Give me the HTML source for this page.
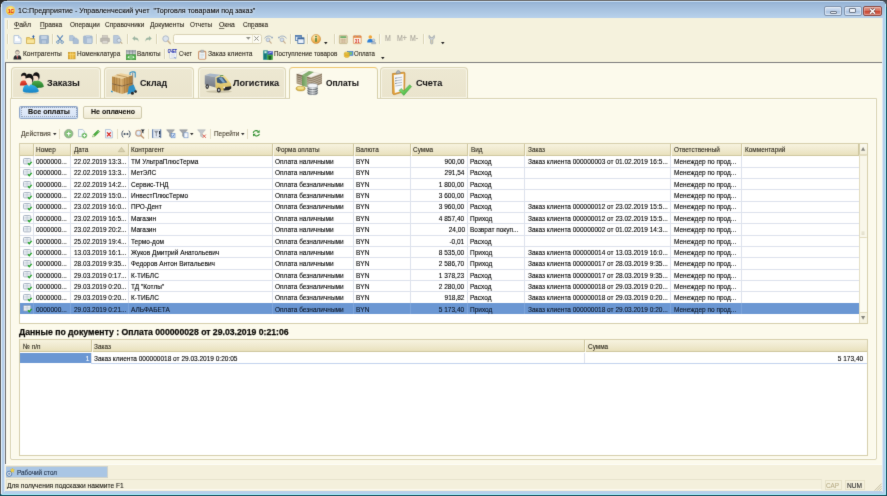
<!DOCTYPE html>
<html lang="ru"><head><meta charset="utf-8"><title>1С:Предприятие - Управленческий учет</title>
<style>
html,body{margin:0;padding:0}
body{width:887px;height:496px;overflow:hidden;position:relative;background:#26343c;font-family:"Liberation Sans",sans-serif}
.t{position:absolute;white-space:pre;line-height:12px;height:12px;display:block;-webkit-text-stroke:0.12px currentColor}
u{text-decoration-thickness:0.6px;text-underline-offset:0.6px;text-decoration-color:rgba(42,37,28,.6)}
div{box-sizing:border-box}
svg{overflow:visible}
#w{position:absolute;left:0;top:0;width:887px;height:496px;filter:url(#soft)}
</style></head><body><svg width="0" height="0" style="position:absolute"><defs><filter id="soft" x="0" y="0" width="100%" height="100%" color-interpolation-filters="sRGB"><feConvolveMatrix order="3" kernelMatrix="0.0086 0.0757 0.0086 0.0757 0.6628 0.0757 0.0086 0.0757 0.0086" divisor="1" edgeMode="duplicate" preserveAlpha="true"/></filter></defs></svg><div id="w">

<div style="position:absolute;left:0px;top:0px;width:887px;height:496px;background:#16505f;"></div>
<div style="position:absolute;left:0px;top:0px;width:887px;height:1.2px;background:#767676;"></div>
<div style="position:absolute;left:0px;top:0px;width:1.1px;height:494px;background:#5c5c5c;"></div>
<div style="position:absolute;left:0px;top:0px;width:7px;height:7px;background:#2c2c2c;"></div>
<div style="position:absolute;left:880px;top:0px;width:7px;height:7px;background:#4a4f55;"></div>
<div style="position:absolute;left:1px;top:1px;width:885px;height:494px;background:#b5cfea;border-radius:5px 5px 1px 1px;"></div>
<div style="position:absolute;left:1px;top:1px;width:885px;height:17px;background:linear-gradient(#c8e0f8 0,#c8e0f8 1px,#90b0d4 1.2px,#9cb8d8 3px,#b6d0ea 16px);border-radius:5px 5px 0 0;"></div>
<div style="position:absolute;left:1px;top:4px;width:1px;height:490px;background:#e4f4ff;"></div>
<div style="position:absolute;left:885px;top:4px;width:1px;height:490px;background:#b4f0ff;"></div>
<div style="position:absolute;left:2px;top:494px;width:884px;height:1px;background:#a8f0fc;"></div>
<div style="position:absolute;left:4.4px;top:18px;width:0.8px;height:473.5px;background:#dbe7f5;"></div>
<div style="position:absolute;left:881.8px;top:18px;width:0.8px;height:473.5px;background:#dbe7f5;"></div>
<div style="position:absolute;left:5px;top:17.6px;width:877px;height:473.4px;background:#f5f2dd;"></div>
<span class="t" style="left:17.5px;transform-origin:0 50%;top:4.90px;font-size:7.9px;transform:scaleX(0.9024);color:#000;font-weight:normal;text-shadow:0 0 3px rgba(255,255,255,.9),0 0 5px rgba(255,255,255,.7);-webkit-text-stroke:0.1px #000;">1С:Предприятие - Управленческий учет  "Торговля товарами под заказ"</span>
<div style="position:absolute;left:6.2px;top:6.2px;width:9.2px;height:9.2px;box-shadow:0 0 1.5px rgba(255,255,255,.8);border-radius:50%;background:radial-gradient(circle at 50% 35%,#fff2a0,#f7c83a 60%,#e39a1f);"></div>
<span class="t" style="left:7.8px;transform-origin:0 50%;top:5.00px;font-size:5.2px;transform:scaleX(0.9);color:#d81e1e;font-weight:bold;">1С</span>
<div style="position:absolute;left:823.5px;top:6px;width:18px;height:9.5px;border:1px solid #7f93ad;border-radius:2px;background:linear-gradient(#d6e3f3,#b9cde6 50%,#a9c1de 50%,#c4d6ec);box-shadow:inset 0 0 0 0.7px rgba(255,255,255,.6);"></div>
<div style="position:absolute;left:829.5px;top:11px;width:7px;height:2.6px;background:#eef2f8;border:0.7px solid #6a7585;border-radius:1px;"></div>
<div style="position:absolute;left:843.5px;top:6px;width:18px;height:9.5px;border:1px solid #7f93ad;border-radius:2px;background:linear-gradient(#d6e3f3,#b9cde6 50%,#a9c1de 50%,#c4d6ec);box-shadow:inset 0 0 0 0.7px rgba(255,255,255,.6);"></div>
<div style="position:absolute;left:849px;top:8.3px;width:7px;height:5px;background:#eef2f8;border:1.2px solid #6a7585;border-radius:1px;"></div>
<div style="position:absolute;left:863px;top:6px;width:18.5px;height:9.5px;border:1px solid #8a4a44;border-radius:2px;background:linear-gradient(#e3a193,#d36a58 50%,#c6452f 50%,#d97060);box-shadow:inset 0 0 0 0.7px rgba(255,255,255,.4);"></div>
<svg style="position:absolute;left:868.6px;top:7.6px;" width="7" height="6.4" viewBox="0 0 7 6.4"><path d="M1 .8L6 5.6M6 .8L1 5.6" stroke="#5a3a3a" stroke-width="2.6"/><path d="M1 .8L6 5.6M6 .8L1 5.6" stroke="#fff" stroke-width="1.5"/></svg>
<span class="t" style="left:14.1px;transform-origin:0 50%;top:19.00px;font-size:7.7px;transform:scaleX(0.898);color:#2e281e;font-weight:normal;"><u>Ф</u>айл</span>
<span class="t" style="left:40.4px;transform-origin:0 50%;top:19.00px;font-size:7.7px;transform:scaleX(0.8497);color:#2e281e;font-weight:normal;"><u>П</u>равка</span>
<span class="t" style="left:69.8px;transform-origin:0 50%;top:19.00px;font-size:7.7px;transform:scaleX(0.8274);color:#2e281e;font-weight:normal;">Операции</span>
<span class="t" style="left:104.8px;transform-origin:0 50%;top:19.00px;font-size:7.7px;transform:scaleX(0.8446);color:#2e281e;font-weight:normal;">Справочники</span>
<span class="t" style="left:149.9px;transform-origin:0 50%;top:19.00px;font-size:7.7px;transform:scaleX(0.8642);color:#2e281e;font-weight:normal;"><u>Д</u>окументы</span>
<span class="t" style="left:190.2px;transform-origin:0 50%;top:19.00px;font-size:7.7px;transform:scaleX(0.8266);color:#2e281e;font-weight:normal;">Отчеты</span>
<span class="t" style="left:218.7px;transform-origin:0 50%;top:19.00px;font-size:7.7px;transform:scaleX(0.883);color:#2e281e;font-weight:normal;"><u>О</u>кна</span>
<span class="t" style="left:243.4px;transform-origin:0 50%;top:19.00px;font-size:7.7px;transform:scaleX(0.831);color:#2e281e;font-weight:normal;">Сп<u>р</u>авка</span>
<div style="position:absolute;left:7.3px;top:19.5px;width:1px;height:9.5px;background:#dcd7bd;box-shadow:1px 0 0 #fcfbf2;"></div>
<div style="position:absolute;left:7.3px;top:34px;width:1px;height:9.5px;background:#dcd7bd;box-shadow:1px 0 0 #fcfbf2;"></div>
<div style="position:absolute;left:7.3px;top:49.5px;width:1px;height:9.5px;background:#dcd7bd;box-shadow:1px 0 0 #fcfbf2;"></div>
<svg style="position:absolute;left:12.7px;top:34.6px;" width="9" height="9" viewBox="0 0 9 9"><path d="M1 .6H5.6L8 3V8.4H1Z" fill="#fdfeff" stroke="#9fb6d3" stroke-width=".8"/><path d="M5.6 .6V3H8" fill="#e3ecf7" stroke="#9fb6d3" stroke-width=".6"/><path d="M1.6 6H7.4V8H1.6Z" fill="#e6eef8"/></svg>
<svg style="position:absolute;left:25.8px;top:34.6px;" width="10" height="9" viewBox="0 0 10 9"><path d="M.6 2.6H3.6L4.4 3.6H8.6V8.4H.6Z" fill="#f3d676" stroke="#c9a443" stroke-width=".8"/><path d="M1 5H8.2V8H1Z" fill="#f8e59c"/><path d="M7.4 3.4V1" stroke="#2f5fa5" stroke-width="1.1"/><path d="M5.9 1.8L7.4 .1L8.9 1.8Z" fill="#2f5fa5"/></svg>
<svg style="position:absolute;left:38.8px;top:34.6px;" width="10" height="9" viewBox="0 0 10 9"><rect x=".5" y=".5" width="9" height="8" rx=".6" fill="#9db3cd" stroke="#8ba3c0" stroke-width=".6"/><rect x="2.2" y=".8" width="5.6" height="3.2" fill="#c4d3e4"/><rect x="3" y="5.4" width="4" height="3" fill="#b7c8dc"/></svg>
<div style="position:absolute;left:51.5px;top:34px;width:1px;height:10px;background:#dbd5b8;box-shadow:1px 0 0 #fbf9ee"></div>
<svg style="position:absolute;left:56.3px;top:34.6px;" width="8" height="9" viewBox="0 0 8 9"><path d="M1.2 .4L5.6 6M6.8 .4L2.4 6" stroke="#5f89bb" stroke-width="1.2" fill="none"/><circle cx="1.9" cy="7.1" r="1.3" fill="none" stroke="#5f89bb" stroke-width=".9"/><circle cx="6.1" cy="7.1" r="1.3" fill="none" stroke="#5f89bb" stroke-width=".9"/></svg>
<svg style="position:absolute;left:69px;top:34.6px;" width="10" height="9" viewBox="0 0 10 9"><path d="M.6 .6H4L5.6 2.2V5.6H.6Z" fill="#b4c6db" stroke="#9fb4cd" stroke-width=".7"/><path d="M4.2 3.2H7.6L9.3 4.9V8.5H4.2Z" fill="#aabed6" stroke="#98aeca" stroke-width=".7"/></svg>
<svg style="position:absolute;left:83px;top:34.6px;" width="10" height="9" viewBox="0 0 10 9"><rect x=".6" y="1" width="8.6" height="7.5" rx=".7" fill="#a9bcd3" stroke="#97adc8" stroke-width=".7"/><rect x="3" y=".2" width="3.8" height="1.8" fill="#bccbdd"/><rect x="4" y="3.4" width="4.6" height="4.6" fill="#c6d4e4"/></svg>
<div style="position:absolute;left:95.5px;top:34px;width:1px;height:10px;background:#dbd5b8;box-shadow:1px 0 0 #fbf9ee"></div>
<svg style="position:absolute;left:99.8px;top:34.6px;" width="10" height="9" viewBox="0 0 10 9"><rect x="2.4" y=".5" width="5.2" height="3" fill="#d0ccc5" stroke="#b5b0a8" stroke-width=".5"/><rect x=".5" y="3" width="9" height="4" rx=".8" fill="#bcb8b0" stroke="#aaa69e" stroke-width=".5"/><rect x="2.2" y="5.6" width="5.6" height="2.8" fill="#d8d5cf" stroke="#b5b0a8" stroke-width=".5"/></svg>
<svg style="position:absolute;left:113.2px;top:34.6px;" width="10" height="9" viewBox="0 0 10 9"><path d="M.6 .5H5L6.8 2.2V8.2H.6Z" fill="#b9c9dc" stroke="#a2b5cd" stroke-width=".7"/><circle cx="6" cy="5.4" r="2" fill="#d7e2ee" stroke="#9fa9b5" stroke-width=".8"/><path d="M7.4 6.8L9.3 8.7" stroke="#bfa98a" stroke-width="1.2"/></svg>
<div style="position:absolute;left:126.5px;top:34px;width:1px;height:10px;background:#dbd5b8;box-shadow:1px 0 0 #fbf9ee"></div>
<svg style="position:absolute;left:132.3px;top:36px;" width="7" height="6" viewBox="0 0 7 6"><path d="M.2 2.4L3 .1V1.5C5.6 1.5 6.8 3 6.6 5.8C6 4.2 5 3.5 3 3.5V4.8Z" fill="#9db5a2"/></svg>
<svg style="position:absolute;left:144.8px;top:36px;" width="7" height="6" viewBox="0 0 7 6"><path d="M6.8 2.4L4 .1V1.5C1.4 1.5 .2 3 .4 5.8C1 4.2 2 3.5 4 3.5V4.8Z" fill="#9db5a2"/></svg>
<div style="position:absolute;left:156.2px;top:34px;width:1px;height:10px;background:#dbd5b8;box-shadow:1px 0 0 #fbf9ee"></div>
<svg style="position:absolute;left:161.8px;top:34.6px;" width="9" height="9.5" viewBox="0 0 9 9.5"><circle cx="3.7" cy="3.7" r="2.9" fill="#dbe3ed" stroke="#b0bac8" stroke-width="1"/><path d="M5.9 6L8.2 8.6" stroke="#cdb896" stroke-width="1.5" stroke-linecap="round"/></svg>
<div style="position:absolute;left:173px;top:33.7px;width:88.5px;height:10px;background:#fdfcf3;border:1px solid #d9d2b4;border-radius:2.5px;"></div>
<div style="position:absolute;left:252px;top:35px;width:1px;height:7.5px;background:#ece8d2;"></div>
<svg style="position:absolute;left:245.7px;top:37.4px;" width="4.6" height="2.8" viewBox="0 0 4.6 2.8"><path d="M0 0H4.6L2.3 2.8Z" fill="#8f8f86"/></svg>
<svg style="position:absolute;left:254.3px;top:36.3px;" width="5" height="5" viewBox="0 0 5 5"><path d="M.4 .4L4.6 4.6M4.6 .4L.4 4.6" stroke="#8f8f86" stroke-width="1"/></svg>
<svg style="position:absolute;left:264.4px;top:34.6px;" width="9" height="9" viewBox="0 0 9 9"><g><path d="M.6 3.4C2 .6 6.4 .2 8.4 2.8" fill="none" stroke="#8fa3bd" stroke-width=".9"/><path d="M8.9 1.4L8.6 3.6L6.6 3Z" fill="#8fa3bd"/></g><circle cx="4" cy="4.8" r="1.9" fill="#d4deea" stroke="#a3afbf" stroke-width=".8"/><path d="M5.4 6.2L7.2 8.2" stroke="#c9ae8e" stroke-width="1.2" stroke-linecap="round"/></svg>
<svg style="position:absolute;left:278px;top:34.6px;" width="9" height="9" viewBox="0 0 9 9"><g transform="translate(9 0) scale(-1 1)"><path d="M.6 3.4C2 .6 6.4 .2 8.4 2.8" fill="none" stroke="#8fa3bd" stroke-width=".9"/><path d="M8.9 1.4L8.6 3.6L6.6 3Z" fill="#8fa3bd"/></g><circle cx="4" cy="4.8" r="1.9" fill="#d4deea" stroke="#a3afbf" stroke-width=".8"/><path d="M5.4 6.2L7.2 8.2" stroke="#c9ae8e" stroke-width="1.2" stroke-linecap="round"/></svg>
<div style="position:absolute;left:289.9px;top:34px;width:1px;height:10px;background:#dbd5b8;box-shadow:1px 0 0 #fbf9ee"></div>
<svg style="position:absolute;left:294.8px;top:34.6px;" width="9.5" height="9" viewBox="0 0 9.5 9"><rect x=".4" y=".4" width="6" height="5" fill="#dfe9f5" stroke="#4f79ad" stroke-width=".8"/><rect x=".4" y=".4" width="6" height="1.4" fill="#4f79ad"/><rect x="2.8" y="2.8" width="6.2" height="5.6" fill="#eaf1fa" stroke="#3f6aa0" stroke-width=".8"/><rect x="2.8" y="2.8" width="6.2" height="1.5" fill="#3f6aa0"/></svg>
<div style="position:absolute;left:306.8px;top:34px;width:1px;height:10px;background:#dbd5b8;box-shadow:1px 0 0 #fbf9ee"></div>
<svg style="position:absolute;left:310.9px;top:33.9px;" width="10" height="10" viewBox="0 0 10 10"><defs><radialGradient id="gi" cx=".4" cy=".3" r=".8"><stop offset="0" stop-color="#fff1c4"/><stop offset=".55" stop-color="#f1b85a"/><stop offset="1" stop-color="#d98a2a"/></radialGradient></defs><circle cx="5" cy="5" r="4.6" fill="url(#gi)" stroke="#c98d3c" stroke-width=".5"/><rect x="4.3" y="4" width="1.4" height="3.8" fill="#3c7a32"/><circle cx="5" cy="2.6" r=".85" fill="#3c7a32"/></svg>
<svg style="position:absolute;left:324.4px;top:41.6px;" width="3.6" height="2.2" viewBox="0 0 3.6 2.2"><path d="M0 0H3.6L1.8 2.2Z" fill="#222"/></svg>
<div style="position:absolute;left:333.9px;top:34px;width:1px;height:10px;background:#dbd5b8;box-shadow:1px 0 0 #fbf9ee"></div>
<svg style="position:absolute;left:339.1px;top:34.5px;" width="8.6" height="9" viewBox="0 0 8.6 9"><rect x=".4" y=".4" width="7.8" height="8.2" rx=".6" fill="#eadfc0" stroke="#b9a77a" stroke-width=".7"/><rect x="1.3" y="1.2" width="6" height="1.8" fill="#6fae6a"/><path d="M1.4 4.4H7.2M1.4 5.8H7.2M1.4 7.2H7.2M3.2 3.6V8M5.2 3.6V8" stroke="#c6a98a" stroke-width=".6"/></svg>
<svg style="position:absolute;left:353.2px;top:34.5px;" width="8.6" height="9" viewBox="0 0 8.6 9"><rect x=".4" y=".8" width="7.8" height="7.8" rx=".6" fill="#fbf3e6" stroke="#d98a4a" stroke-width=".7"/><rect x=".4" y=".8" width="7.8" height="2" fill="#e7833d"/><path d="M2.4 0V2M6.2 0V2" stroke="#a9a9a9" stroke-width=".8"/><text x="4.3" y="7.6" font-size="4.6" font-weight="bold" fill="#d8342a" text-anchor="middle" font-family="Liberation Sans, sans-serif">31</text></svg>
<svg style="position:absolute;left:367.2px;top:34.6px;" width="9" height="9" viewBox="0 0 9 9"><circle cx="3.3" cy="2" r="1.8" fill="#f0a53a"/><path d="M.2 7.6C.2 4.6 1.6 4 3.3 4S6.4 4.6 6.4 7.6Z" fill="#2f7fd6"/><circle cx="6.6" cy="5.2" r="1.3" fill="#c9d3de" stroke="#7f8fa3" stroke-width=".4"/><path d="M4.6 8.8C4.6 7 5.4 6.6 6.6 6.6S8.8 7 8.8 8.8Z" fill="#aebccc" stroke="#7f8fa3" stroke-width=".4"/></svg>
<div style="position:absolute;left:379.3px;top:34px;width:1px;height:10px;background:#dbd5b8;box-shadow:1px 0 0 #fbf9ee"></div>
<span class="t" style="left:384.6px;transform-origin:0 50%;top:33.40px;font-size:8.2px;transform:scaleX(0.85);color:#aaa69c;font-weight:normal;">M</span>
<span class="t" style="left:396.8px;transform-origin:0 50%;top:33.40px;font-size:8.2px;transform:scaleX(0.85);color:#aaa69c;font-weight:normal;">M+</span>
<span class="t" style="left:410px;transform-origin:0 50%;top:33.40px;font-size:8.2px;transform:scaleX(0.85);color:#aaa69c;font-weight:normal;">M-</span>
<div style="position:absolute;left:422.5px;top:34px;width:1px;height:10px;background:#dbd5b8;box-shadow:1px 0 0 #fbf9ee"></div>
<svg style="position:absolute;left:427.6px;top:34.8px;" width="7.4" height="9.4" viewBox="0 0 7.4 9.4"><path d="M1 .4V2.4C1 3.6 2.2 4 2.6 4.6V8.2C2.6 9.2 4.8 9.2 4.8 8.2V4.6C5.2 4 6.4 3.6 6.4 2.4V.4L5 1.6V2.6H2.4V1.6Z" fill="#cfd3d6" stroke="#8f979e" stroke-width=".6"/><path d="M3.1 5.4H4.3M3.1 6.6H4.3M3.1 7.8H4.3" stroke="#d6c58a" stroke-width=".6"/></svg>
<svg style="position:absolute;left:440.5px;top:41.6px;" width="3.6" height="2.2" viewBox="0 0 3.6 2.2"><path d="M0 0H3.6L1.8 2.2Z" fill="#222"/></svg>
<div style="position:absolute;left:5px;top:62px;width:877px;height:1.3px;background:#7d7d7d;"></div>
<div style="position:absolute;left:4.9px;top:63px;width:1.2px;height:401px;background:#6c6c6c;"></div>
<div style="position:absolute;left:6px;top:63.3px;width:876px;height:400.7px;background:#fcfaec;"></div>
<svg style="position:absolute;left:13px;top:49.5px;" width="9" height="10" viewBox="0 0 9 10"><circle cx="4.4" cy="2.3" r="2" fill="#e9d9c6" stroke="#7a7a7a" stroke-width=".5"/><path d="M2.6 1.6C3 .2 5.8 .2 6.2 1.6C5.4 1.2 3.4 1.2 2.6 1.6Z" fill="#555"/><path d="M.5 9.6C.5 6 2 5 4.4 5S8.3 6 8.3 9.6Z" fill="#2c2c30"/><path d="M3.2 5L4.4 8.8L5.6 5Z" fill="#f4f4f4"/><path d="M4.1 5.4H4.7L4.9 8L4.4 8.8L3.9 8Z" fill="#b33"/></svg>
<svg style="position:absolute;left:67.6px;top:52px;" width="7.4" height="7.2" viewBox="0 0 7.4 7.2"><rect x=".3" y=".3" width="6.8" height="6.6" fill="#e9b53a" stroke="#c28f22" stroke-width=".6"/><path d="M.3 2.6H7.1M2.6 .3V6.9M4.8 .3V6.9" stroke="#f7dc85" stroke-width=".6"/></svg>
<svg style="position:absolute;left:126px;top:49.5px;" width="10" height="10" viewBox="0 0 10 10"><rect x=".3" y=".3" width="9.4" height="4.2" fill="#c8ccd0" stroke="#8d949b" stroke-width=".6"/><path d="M.3 1.8H9.7M3.4 .3V4.5M6.6 .3V4.5" stroke="#767d85" stroke-width=".6"/><rect x=".3" y="4.8" width="9.4" height="4.9" fill="#4fb04a" stroke="#3a8e37" stroke-width=".6"/><path d="M1.4 7.2L3.4 5.6V8.8ZM8.6 7.2L6.6 5.6V8.8Z" fill="#e8f6e6"/><path d="M5 5V9.6" stroke="#e8f6e6" stroke-width=".6"/></svg>
<div style="position:absolute;left:164.3px;top:49px;width:1px;height:10px;background:#dbd5b8;box-shadow:1px 0 0 #fbf9ee"></div>
<svg style="position:absolute;left:168.3px;top:49.3px;" width="9" height="10" viewBox="0 0 9 10"><rect x="1.8" y="2.6" width="6.4" height="7" fill="#f3f5f8" stroke="#b8c1cc" stroke-width=".5"/><path d="M3 5.4H7M3 6.8H7M3 8.2H6" stroke="#c6ced8" stroke-width=".5"/><text x="-.2" y="3.7" font-size="4.6" font-weight="bold" fill="#2430b4" stroke="#2430b4" stroke-width=".15" font-family="Liberation Sans, sans-serif" textLength="9" lengthAdjust="spacingAndGlyphs">СЧЕТ</text><path d="M5.6 8.2L7.6 9.8V8.2Z" fill="#5a78c8"/></svg>
<svg style="position:absolute;left:198px;top:50px;" width="8.4" height="9.6" viewBox="0 0 8.4 9.6"><rect x=".5" y="1.2" width="7.4" height="8" rx=".8" fill="#dda070" stroke="#b06a3c" stroke-width=".5"/><rect x="1.2" y="2.2" width="6" height="6.6" fill="#eef5f8"/><rect x="2.6" y=".2" width="3.2" height="2" rx=".5" fill="#b9bec4" stroke="#7f858c" stroke-width=".4"/><path d="M2.4 4.4H6M2.4 5.8H6M2.4 7.2H5" stroke="#b9c9d2" stroke-width=".5"/></svg>
<svg style="position:absolute;left:263px;top:49.5px;" width="10" height="10" viewBox="0 0 10 10"><rect x=".2" y=".4" width="4.6" height="9.4" fill="#1f8a8a"/><rect x="4.8" y="1.2" width="5" height="4" fill="#3b4fc0"/><rect x="4.2" y="4.6" width="5.6" height="5.2" fill="#3fa33f"/><rect x="5.6" y="6" width="2.6" height="3.8" fill="#1d5e2a"/><path d="M1.4 1.2H3.6V3.2H1.4Z" fill="#d6efe9"/><path d="M2 4V9" stroke="#0d5a5a" stroke-width=".8"/><path d="M5.4 3.2L8.8 2" stroke="#e7e9ff" stroke-width=".7"/></svg>
<svg style="position:absolute;left:344px;top:50.6px;" width="9.4" height="7" viewBox="0 0 9.4 7"><rect x="3.4" y=".3" width="5.6" height="4.2" fill="#5d9be0" stroke="#3a73b7" stroke-width=".5"/><rect x="4.4" y="1.2" width="3.6" height="2.4" fill="#79c26f"/><ellipse cx="2.8" cy="2" rx="2.5" ry="1.1" fill="#f5d04d" stroke="#c59a22" stroke-width=".4"/><path d="M.3 2V5.4C.3 6.8 5.3 6.8 5.3 5.4V2C5.3 3.4 .3 3.4 .3 2Z" fill="#ecbd38" stroke="#c59a22" stroke-width=".4"/><path d="M.3 3.6C.3 5 5.3 5 5.3 3.6" fill="none" stroke="#c59a22" stroke-width=".4"/></svg>
<svg style="position:absolute;left:381.0px;top:57.2px;" width="3.6" height="2.2" viewBox="0 0 3.6 2.2"><path d="M0 0H3.6L1.8 2.2Z" fill="#222"/></svg>
<span class="t" style="left:22.7px;transform-origin:0 50%;top:48.40px;font-size:7.7px;transform:scaleX(0.8578);color:#2e281e;font-weight:normal;">Контрагенты</span>
<span class="t" style="left:77.4px;transform-origin:0 50%;top:48.40px;font-size:7.7px;transform:scaleX(0.8379);color:#2e281e;font-weight:normal;">Номенклатура</span>
<span class="t" style="left:136.8px;transform-origin:0 50%;top:48.40px;font-size:7.7px;transform:scaleX(0.8223);color:#2e281e;font-weight:normal;">Валюты</span>
<span class="t" style="left:179px;transform-origin:0 50%;top:48.40px;font-size:7.7px;transform:scaleX(0.7571);color:#2e281e;font-weight:normal;">Счет</span>
<span class="t" style="left:208px;transform-origin:0 50%;top:48.40px;font-size:7.7px;transform:scaleX(0.8752);color:#2e281e;font-weight:normal;">Заказ клиента</span>
<span class="t" style="left:274.1px;transform-origin:0 50%;top:48.40px;font-size:7.7px;transform:scaleX(0.8158);color:#2e281e;font-weight:normal;">Поступление товаров</span>
<span class="t" style="left:354.4px;transform-origin:0 50%;top:48.40px;font-size:7.7px;transform:scaleX(0.789);color:#2e281e;font-weight:normal;">Оплата</span>
<div style="position:absolute;left:10.5px;top:67px;width:90px;height:31px;background:linear-gradient(#ede8d2,#eae4cd);border:1px solid #dcd6b8;border-bottom:none;border-radius:4px 4px 0 0;box-shadow:inset 0 0 0 1px #f7f4e6;"></div>
<div style="position:absolute;left:104px;top:67px;width:90px;height:31px;background:linear-gradient(#ede8d2,#eae4cd);border:1px solid #dcd6b8;border-bottom:none;border-radius:4px 4px 0 0;box-shadow:inset 0 0 0 1px #f7f4e6;"></div>
<div style="position:absolute;left:197.5px;top:67px;width:88.5px;height:31px;background:linear-gradient(#ede8d2,#eae4cd);border:1px solid #dcd6b8;border-bottom:none;border-radius:4px 4px 0 0;box-shadow:inset 0 0 0 1px #f7f4e6;"></div>
<div style="position:absolute;left:289px;top:67px;width:88.5px;height:32px;background:#fcfaec;border:1px solid #d6cfa8;border-top:1.4px solid #efc66e;border-bottom:none;border-radius:4px 4px 0 0;"></div>
<div style="position:absolute;left:380px;top:67px;width:88px;height:31px;background:linear-gradient(#ede8d2,#eae4cd);border:1px solid #dcd6b8;border-bottom:none;border-radius:4px 4px 0 0;box-shadow:inset 0 0 0 1px #f7f4e6;"></div>
<div style="position:absolute;left:10.2px;top:97.6px;width:866.4px;height:362.4px;border:1.5px solid #d9d3b4;border-radius:0 0 2px 2px;box-shadow:inset 0 0 0 1px #fefdf6;"></div>
<div style="position:absolute;left:290px;top:97px;width:86.5px;height:2.5px;background:#fcfaec;"></div>
<svg style="position:absolute;left:20.3px;top:72px;" width="25" height="22.5" viewBox="0 0 25 22.5">
<defs>
<linearGradient id="pr" x1="0" y1="0" x2="0" y2="1"><stop offset="0" stop-color="#f0513a"/><stop offset="1" stop-color="#c2241a"/></linearGradient>
<linearGradient id="pg" x1="0" y1="0" x2="0" y2="1"><stop offset="0" stop-color="#4fae4a"/><stop offset="1" stop-color="#237a2c"/></linearGradient>
<linearGradient id="pb" x1="0" y1="0" x2="0" y2="1"><stop offset="0" stop-color="#37b4e6"/><stop offset="1" stop-color="#1480c4"/></linearGradient>
</defs>
<!-- red -->
<path d="M0 13.6C0 9.6 1.6 8.4 3.8 8.4S7 9.6 7.4 13.6Z" fill="url(#pr)"/>
<ellipse cx="3.8" cy="4.5" rx="2.6" ry="3.5" fill="#f9dfcb"/>
<path d="M1.1 4.4C.6 .6 5.6 -.4 6.6 2.6C6.8 4 6.6 5.6 6.2 6.4C6 4.2 4.6 2.6 1.1 4.4Z" fill="#151313"/>
<!-- green -->
<path d="M11.6 14.6C11.6 9.8 13.6 8.6 16.6 8.6S22.8 9.8 23.8 14.6C23.8 16.4 11.6 16.4 11.6 14.6Z" fill="url(#pg)"/>
<ellipse cx="16" cy="4.6" rx="2.8" ry="4.2" fill="#f9dfcb"/>
<path d="M13.1 4.2C12.6 -.6 19.4 -1.2 19.6 4C19.6 6 19.2 7.4 18.6 8C18.8 5.2 17.4 2.8 13.1 4.2Z" fill="#151313"/>
<!-- blue front -->
<path d="M2.8 19C2.8 13.8 5.4 12.4 9 12.4S17.6 13.8 18.8 19C18.8 21.6 2.8 21.6 2.8 19Z" fill="url(#pb)"/>
<ellipse cx="8.8" cy="7.4" rx="3.2" ry="5.2" fill="#fbe6d4"/>
<path d="M7 11.6H10.8L9 14.6Z" fill="#f9dfcb"/>
<path d="M5.5 6.6C4.8 .8 13.2 -.2 13.4 6.2C13.4 8.6 13 10 12.4 10.8C12.6 7.2 11 4.2 5.5 6.6Z" fill="#151313"/>
<ellipse cx="11" cy="21.4" rx="8" ry=".9" fill="#c9c2a6" opacity=".6"/>
</svg>
<svg style="position:absolute;left:111px;top:70.8px;" width="27" height="24" viewBox="0 0 27 24">
<defs>
<linearGradient id="bx1" x1="0" y1="0" x2="1" y2="0"><stop offset="0" stop-color="#b98a46"/><stop offset="1" stop-color="#d9b273"/></linearGradient>
<linearGradient id="bx2" x1="0" y1="0" x2="1" y2="0"><stop offset="0" stop-color="#cfa463"/><stop offset="1" stop-color="#a9793a"/></linearGradient>
</defs>
<!-- pallet jack back -->
<path d="M18.6 2.4C19 .8 24 .2 24.4 1.8" fill="none" stroke="#2f8fc4" stroke-width="1.3"/>
<path d="M21.6 1.4V20" stroke="#8d99a6" stroke-width="1.2"/>
<path d="M19 2.6V8M24.2 2V6.4" stroke="#2f8fc4" stroke-width="1.1"/>
<!-- lower boxes -->
<path d="M1 13.2L11 15.4V23L1 19.6Z" fill="url(#bx1)"/>
<path d="M11 15.4L21.6 12.4V19.6L11 23Z" fill="url(#bx2)"/>
<!-- upper boxes -->
<path d="M1 5.4L9.6 2.2L21.6 4.6L11 7.8Z" fill="#ecd19c"/>
<path d="M1 5.4L11 7.8V14.8L1 12.6Z" fill="url(#bx1)"/>
<path d="M11 7.8L21.6 4.6V11.8L11 14.8Z" fill="url(#bx2)"/>
<path d="M1 12.8L11 15.1L21.6 12.1" fill="none" stroke="#6d4a22" stroke-width=".9"/>
<path d="M3.4 6V20.4M5.8 6.6V21.4M8.4 7.2V22.2M13.6 7V22.2M16 6.2V21.4M18.8 5.4V20.6M5.6 3.8L16 6.2" stroke="#9a6e32" stroke-width=".55" fill="none"/>
<!-- blue jack -->
<path d="M17.8 15.6L22.6 13.4L25.4 20.6L16.4 23.4Z" fill="#2f8fc4"/>
<path d="M0 19.6L2 20.4L1.6 21.6L0 21Z" fill="#2f8fc4"/>
<circle cx="21.4" cy="22.2" r="1.5" fill="#2b2b2b"/><circle cx="24.6" cy="20.6" r="1.3" fill="#2b2b2b"/>
</svg>
<svg style="position:absolute;left:203.6px;top:73px;" width="29" height="20.5" viewBox="0 0 29 20.5">
<defs>
<linearGradient id="tk1" x1="0" y1="0" x2="0" y2="1"><stop offset="0" stop-color="#9aa1ac"/><stop offset="1" stop-color="#757a84"/></linearGradient>
<linearGradient id="tk2" x1="0" y1="0" x2="0" y2="1"><stop offset="0" stop-color="#f1e09a"/><stop offset="1" stop-color="#d6ba5a"/></linearGradient>
</defs>
<ellipse cx="15" cy="18.6" rx="13" ry="1.3" fill="#bdb69a" opacity=".7"/>
<!-- cargo -->
<path d="M.8 2.2L6 .4L16.6 1.8L11.6 4.2Z" fill="#a9b7c8"/>
<path d="M.8 2.2L11.6 4.2V14.6L.8 11.6Z" fill="url(#tk1)"/>
<!-- cab -->
<path d="M11.6 4.2L16.6 2L21 3L26.6 10.2L27.4 14.8L25.2 17L14.4 17.6L11.6 14.6Z" fill="url(#tk2)"/>
<path d="M12.6 5L16.4 3.6L19.4 4.4L23.4 9.6L16.6 10.4L13 9.4Z" fill="#3d5a78"/>
<path d="M14.6 4.8L17.6 4.2L21.4 9.4L18.8 9.8Z" fill="#7fa6c8"/>
<path d="M15.4 2.4L19 2L19.6 2.8L16 3.2Z" fill="#4d8a4a"/>
<path d="M19.6 14.2L27.2 13.2L27.2 15.4L24.8 17.2L19.6 17.4Z" fill="#26282c"/>
<circle cx="20.2" cy="14.6" r="1" fill="#fff8e0"/>
<!-- wheels -->
<ellipse cx="3.2" cy="13.6" rx="1.7" ry="2.3" fill="#2a2a2c"/><ellipse cx="3.2" cy="13.6" rx=".8" ry="1.1" fill="#b9bcc0"/>
<ellipse cx="14.8" cy="17" rx="2" ry="2.6" fill="#2a2a2c"/><ellipse cx="14.8" cy="17" rx=".9" ry="1.3" fill="#c9ccd0"/>
</svg>
<svg style="position:absolute;left:294.6px;top:70px;" width="28" height="26" viewBox="0 0 28 26">
<defs>
<linearGradient id="mn1" x1="0" y1="0" x2="0" y2="1"><stop offset="0" stop-color="#75634c"/><stop offset="1" stop-color="#b9aa8e"/></linearGradient>
<linearGradient id="mn2" x1="0" y1="0" x2="1" y2="0"><stop offset="0" stop-color="#6c9858"/><stop offset="1" stop-color="#98bd84"/></linearGradient>
<linearGradient id="cn" x1="0" y1="0" x2="1" y2="0"><stop offset="0" stop-color="#8d949a"/><stop offset=".5" stop-color="#f4f6f8"/><stop offset="1" stop-color="#8d949a"/></linearGradient>
</defs>
<!-- stack top -->
<path d="M1.6 3.8L11 .4L27 3.6L16 7.8Z" fill="#e9e4d8"/>
<path d="M3.6 3.8L11 1.2L24 3.8L16 6.6Z" fill="#f7f5ee"/>
<path d="M1.6 3.8L16 7.8V18.4L1.6 13.6Z" fill="url(#mn1)"/>
<path d="M16 7.8L27 3.6V13.4L16 18.4Z" fill="#93826a"/>
<path d="M1.6 5.8L16 9.8M1.6 7.8L16 11.8M1.6 9.8L16 13.8M1.6 11.8L16 15.8M16 9.8L27 5.6M16 11.8L27 7.6M16 13.8L27 9.6M16 15.8L27 11.6" stroke="#e6dfd0" stroke-width=".5"/>
<!-- green band -->
<path d="M7 5.2L14 1L19 2L12 6.6Z" fill="#82ad6e"/>
<path d="M7 5.2L12 6.6V17L7 15.4Z" fill="url(#mn2)"/>
<!-- gold coin -->
<ellipse cx="5.6" cy="18.6" rx="4.6" ry="2.3" fill="#d9b64a" stroke="#a9862a" stroke-width=".5"/>
<ellipse cx="5.6" cy="18.1" rx="3.4" ry="1.5" fill="#f4e08a"/>
<!-- silver coins -->
<path d="M12.6 15.6V23.4C12.6 26 22.6 26 22.6 23.4V15.6Z" fill="url(#cn)"/>
<path d="M12.6 18C12.6 20.2 22.6 20.2 22.6 18M12.6 20.4C12.6 22.6 22.6 22.6 22.6 20.4M12.6 22.6C12.6 24.8 22.6 24.8 22.6 22.6" fill="none" stroke="#4a4f55" stroke-width=".7"/>
<ellipse cx="17.6" cy="15.6" rx="5" ry="2.2" fill="#f1f3f5" stroke="#9aa1a8" stroke-width=".5"/>
</svg>
<svg style="position:absolute;left:391.3px;top:69.8px;" width="21" height="26" viewBox="0 0 21 26">
<defs>
<linearGradient id="ck" x1="0" y1="0" x2="1" y2="1"><stop offset="0" stop-color="#a4ec8c"/><stop offset="1" stop-color="#2aa82a"/></linearGradient>
</defs>
<path d="M1.4 3.6L12.6 2.2C13.6 2.2 14 2.6 14 3.6L13.6 21.4L3.6 24.6C2.4 24.8 1.6 24.2 1.6 23Z" fill="#e2a23a" stroke="#b4741c" stroke-width=".6"/>
<path d="M2.8 5L12.6 3.8L12.4 20.4L3.8 23Z" fill="#f7f8fa"/>
<path d="M4.4 8.2L11 7.2M4.4 10.8L11 9.8M4.4 13.4L11 12.4M4.4 16L11 15" stroke="#9aa6b2" stroke-width=".7"/>
<path d="M4.2 8.3L5.4 8.1M4.2 10.9L5.4 10.7M4.2 13.5L5.4 13.3" stroke="#5f6a76" stroke-width=".8"/>
<path d="M5 3.8L5.8 1.4L7 .4L8.6 1L9.6 3.2Z" fill="#aeb4ba" stroke="#7a8088" stroke-width=".5"/>
<path d="M8 20.4L10.4 18.4L12.6 21L18.6 14.8L20.6 16.6L12.8 25.4Z" fill="url(#ck)" stroke="#2c8a2a" stroke-width=".4"/>
</svg>
<span class="t" style="left:46.9px;transform-origin:0 50%;top:76.70px;font-size:9.3px;transform:scaleX(0.976);color:#1a1814;font-weight:bold;text-shadow:0 0 1px #fff;">Заказы</span>
<span class="t" style="left:139.5px;transform-origin:0 50%;top:76.70px;font-size:9.3px;transform:scaleX(0.9484);color:#1a1814;font-weight:bold;text-shadow:0 0 1px #fff;">Склад</span>
<span class="t" style="left:233.2px;transform-origin:0 50%;top:76.70px;font-size:9.3px;transform:scaleX(0.9816);color:#1a1814;font-weight:bold;text-shadow:0 0 1px #fff;">Логистика</span>
<span class="t" style="left:325.5px;transform-origin:0 50%;top:76.70px;font-size:9.3px;transform:scaleX(0.9032);color:#1a1814;font-weight:bold;text-shadow:0 0 1px #fff;">Оплаты</span>
<span class="t" style="left:416px;transform-origin:0 50%;top:76.70px;font-size:9.3px;transform:scaleX(0.9787);color:#1a1814;font-weight:bold;text-shadow:0 0 1px #fff;">Счета</span>
<div style="position:absolute;left:19.3px;top:105.6px;width:59px;height:13px;border:1px solid #8fa6c8;border-radius:1.5px;background:linear-gradient(#e4edfa,#d6e3f6);box-shadow:inset 0 0 0 1px #c9dbf3;"></div>
<div style="position:absolute;left:21px;top:107.3px;width:55.6px;height:9.6px;border:1px dotted rgba(60,70,95,.4);"></div>
<span class="t" style="left:27.8px;transform-origin:0 50%;top:106.00px;font-size:7.8px;transform:scaleX(0.9185);color:#16140f;font-weight:bold;">Все оплаты</span>
<div style="position:absolute;left:83.3px;top:105.5px;width:59px;height:13.2px;border:1px solid #d0caac;border-radius:2px;background:linear-gradient(#fbf9ee,#efead3);"></div>
<span class="t" style="left:90.6px;transform-origin:0 50%;top:106.00px;font-size:7.8px;transform:scaleX(0.897);color:#16140f;font-weight:bold;">Не оплачено</span>
<span class="t" style="left:21.2px;transform-origin:0 50%;top:128.10px;font-size:8.0px;transform:scaleX(0.8502);color:#453d2e;font-weight:normal;">Действия</span>
<svg style="position:absolute;left:53.1px;top:132.8px;" width="3.6" height="2.2" viewBox="0 0 3.6 2.2"><path d="M0 0H3.6L1.8 2.2Z" fill="#333"/></svg>
<div style="position:absolute;left:59.2px;top:129px;width:1px;height:9.5px;background:#e3dec5;box-shadow:1px 0 0 #fbf9ee"></div>
<svg style="position:absolute;left:63.6px;top:129.2px;" width="9.4" height="9.4" viewBox="0 0 9.4 9.4"><circle cx="4.7" cy="4.7" r="4.2" fill="#7dbd72" stroke="#9aa596" stroke-width=".9"/><circle cx="4.7" cy="4.7" r="3" fill="#6db562" stroke="#b4dcab" stroke-width=".5"/><path d="M4.7 2.7V6.7M2.7 4.7H6.7" stroke="#fff" stroke-width="1.2"/></svg>
<svg style="position:absolute;left:77.9px;top:128.8px;" width="9.6" height="9.6" viewBox="0 0 9.6 9.6"><path d="M.5 .5H4.6L6.4 2.2V7.6H.5Z" fill="#f3f7fb" stroke="#9fb3cb" stroke-width=".7"/><circle cx="6.4" cy="6.6" r="2.8" fill="#5fb055" stroke="#e9f5e7" stroke-width=".5"/><path d="M6.4 5V8.2M4.8 6.6H8" stroke="#fff" stroke-width="1"/></svg>
<svg style="position:absolute;left:91.8px;top:129.4px;" width="8.4" height="8.6" viewBox="0 0 8.4 8.6"><path d="M.6 8L1.4 5.6L6 1L7.6 2.6L3 7.2Z" fill="#4caf3f" stroke="#2f8a2a" stroke-width=".5"/><path d="M.6 8L1.4 5.6L3 7.2Z" fill="#efe3c0"/><path d="M5.4 1.6L7 3.2" stroke="#d8f0d2" stroke-width=".6"/></svg>
<svg style="position:absolute;left:105.1px;top:128.8px;" width="8" height="9.4" viewBox="0 0 8 9.4"><path d="M.5 .5H5.2L7.4 2.6V8.9H.5Z" fill="#eef3fa" stroke="#9fb3cf" stroke-width=".7"/><path d="M2 3.4L5.8 7.4M5.8 3.4L2 7.4" stroke="#d9261c" stroke-width="1.3"/></svg>
<div style="position:absolute;left:116.7px;top:129px;width:1px;height:9.5px;background:#e3dec5;box-shadow:1px 0 0 #fbf9ee"></div>
<svg style="position:absolute;left:120.8px;top:129.7px;" width="10" height="8" viewBox="0 0 10 8"><path d="M2.2 .6C.4 2.4 .4 5.6 2.2 7.4M7.8 .6C9.6 2.4 9.6 5.6 7.8 7.4" fill="none" stroke="#3a4a60" stroke-width=".9"/><path d="M2.6 4H7.4" stroke="#3a4a60" stroke-width=".8"/><path d="M2.4 4L4 2.8V5.2ZM7.6 4L6 2.8V5.2Z" fill="#3a4a60"/></svg>
<svg style="position:absolute;left:135px;top:128.5px;" width="10.4" height="9.4" viewBox="0 0 10.4 9.4"><circle cx="3.6" cy="4.2" r="2.9" fill="#d3e4f6" stroke="#c7a286" stroke-width="1.1"/><circle cx="3.2" cy="3.8" r="1.1" fill="#f4f9fe"/><path d="M5.8 6.4L8.6 9" stroke="#c39a78" stroke-width="1.5" stroke-linecap="round"/><path d="M5.6 .4H9.8L8.4 2V4.4L7.2 3.6V2Z" fill="#1e2530"/></svg>
<div style="position:absolute;left:147.8px;top:129px;width:1px;height:9.5px;background:#e3dec5;box-shadow:1px 0 0 #fbf9ee"></div>
<svg style="position:absolute;left:151.8px;top:128.8px;" width="9.6" height="9.2" viewBox="0 0 9.6 9.2"><rect x=".5" y=".5" width="8.4" height="8.4" fill="#e6ecf4" stroke="#b4c2d6" stroke-width=".5"/><path d="M.7 .5V8.9M8.7 .5V8.9" stroke="#46689a" stroke-width=".9"/><path d="M2 1.8H6.6L4.8 4.2V7.6L3.8 7V4.2Z" fill="#8d9299"/><path d="M7.6 2V5.6" stroke="#1c2430" stroke-width="1.1"/><circle cx="7.6" cy="7.3" r=".7" fill="#1c2430"/></svg>
<svg style="position:absolute;left:165.8px;top:128.8px;" width="9.6" height="9.2" viewBox="0 0 9.6 9.2"><path d="M.6 .8H8.4L5.4 4.2V8.2L3.6 7.2V4.2Z" fill="#a3a7ad" stroke="#80858c" stroke-width=".5"/><rect x="5.2" y="4.4" width="3.8" height="4.4" fill="#dfeafa" stroke="#5d88c4" stroke-width=".6"/><path d="M6 6.6L6.9 7.6L8.3 5.4" stroke="#2b5fb0" stroke-width=".7" fill="none"/></svg>
<svg style="position:absolute;left:179px;top:128.8px;" width="9.6" height="9.2" viewBox="0 0 9.6 9.2"><path d="M.6 .8H8.4L5.4 4.2V8.2L3.6 7.2V4.2Z" fill="#a3a7ad" stroke="#80858c" stroke-width=".5"/><rect x="5" y="3.8" width="4" height="5" fill="#f6f8fb" stroke="#6a8fc6" stroke-width=".6"/></svg>
<svg style="position:absolute;left:189.5px;top:132.8px;" width="3.6" height="2.2" viewBox="0 0 3.6 2.2"><path d="M0 0H3.6L1.8 2.2Z" fill="#333"/></svg>
<svg style="position:absolute;left:197.2px;top:128.8px;" width="9.6" height="9.2" viewBox="0 0 9.6 9.2"><path d="M.6 .8H8.4L5.4 4.2V8.2L3.6 7.2V4.2Z" fill="#c4c7cb" stroke="#a6aab0" stroke-width=".5"/><path d="M5.8 5.6L8.8 8.8M8.8 5.6L5.8 8.8" stroke="#d8564c" stroke-width="1"/></svg>
<div style="position:absolute;left:209.5px;top:129px;width:1px;height:9.5px;background:#e3dec5;box-shadow:1px 0 0 #fbf9ee"></div>
<span class="t" style="left:213.9px;transform-origin:0 50%;top:128.10px;font-size:8.0px;transform:scaleX(0.7981);color:#453d2e;font-weight:normal;">Перейти</span>
<svg style="position:absolute;left:240.79999999999998px;top:132.8px;" width="3.6" height="2.2" viewBox="0 0 3.6 2.2"><path d="M0 0H3.6L1.8 2.2Z" fill="#333"/></svg>
<div style="position:absolute;left:246.8px;top:129px;width:1px;height:9.5px;background:#e3dec5;box-shadow:1px 0 0 #fbf9ee"></div>
<svg style="position:absolute;left:251.8px;top:129.4px;" width="8.6" height="8.6" viewBox="0 0 8.6 8.6"><path d="M1.2 3.8C1.6 1.8 4.4 .8 6.2 2.4" fill="none" stroke="#2a8c2a" stroke-width="1.1"/><path d="M7.6 1V3.8H4.8Z" fill="#2a8c2a"/><path d="M7.4 4.8C7 6.8 4.2 7.8 2.4 6.2" fill="none" stroke="#2a8c2a" stroke-width="1.1"/><path d="M1 7.6V4.8H3.8Z" fill="#2a8c2a"/></svg>
<div style="position:absolute;left:19px;top:142.5px;width:849px;height:181.3px;background:#fff;border:1px solid #d6cfac;"></div>
<div style="position:absolute;left:20px;top:143.5px;width:847px;height:12.2px;background:linear-gradient(#f7f3df,#f0ead0 50%,#e9e1bd);border-bottom:1px solid #cfc79f;"></div>
<div style="position:absolute;left:32.8px;top:143.5px;width:1px;height:12.2px;background:#cfc79f;box-shadow:1px 0 0 #faf7e8;"></div>
<div style="position:absolute;left:32.8px;top:155.7px;width:1px;height:157.70000000000002px;background:#dde2ec;"></div>
<div style="position:absolute;left:70.0px;top:143.5px;width:1px;height:12.2px;background:#cfc79f;box-shadow:1px 0 0 #faf7e8;"></div>
<div style="position:absolute;left:70.0px;top:155.7px;width:1px;height:157.70000000000002px;background:#dde2ec;"></div>
<div style="position:absolute;left:127.6px;top:143.5px;width:1px;height:12.2px;background:#cfc79f;box-shadow:1px 0 0 #faf7e8;"></div>
<div style="position:absolute;left:127.6px;top:155.7px;width:1px;height:157.70000000000002px;background:#dde2ec;"></div>
<div style="position:absolute;left:272.1px;top:143.5px;width:1px;height:12.2px;background:#cfc79f;box-shadow:1px 0 0 #faf7e8;"></div>
<div style="position:absolute;left:272.1px;top:155.7px;width:1px;height:157.70000000000002px;background:#dde2ec;"></div>
<div style="position:absolute;left:352.6px;top:143.5px;width:1px;height:12.2px;background:#cfc79f;box-shadow:1px 0 0 #faf7e8;"></div>
<div style="position:absolute;left:352.6px;top:155.7px;width:1px;height:157.70000000000002px;background:#dde2ec;"></div>
<div style="position:absolute;left:409.8px;top:143.5px;width:1px;height:12.2px;background:#cfc79f;box-shadow:1px 0 0 #faf7e8;"></div>
<div style="position:absolute;left:409.8px;top:155.7px;width:1px;height:157.70000000000002px;background:#dde2ec;"></div>
<div style="position:absolute;left:467.3px;top:143.5px;width:1px;height:12.2px;background:#cfc79f;box-shadow:1px 0 0 #faf7e8;"></div>
<div style="position:absolute;left:467.3px;top:155.7px;width:1px;height:157.70000000000002px;background:#dde2ec;"></div>
<div style="position:absolute;left:524.4px;top:143.5px;width:1px;height:12.2px;background:#cfc79f;box-shadow:1px 0 0 #faf7e8;"></div>
<div style="position:absolute;left:524.4px;top:155.7px;width:1px;height:157.70000000000002px;background:#dde2ec;"></div>
<div style="position:absolute;left:670.3px;top:143.5px;width:1px;height:12.2px;background:#cfc79f;box-shadow:1px 0 0 #faf7e8;"></div>
<div style="position:absolute;left:670.3px;top:155.7px;width:1px;height:157.70000000000002px;background:#dde2ec;"></div>
<div style="position:absolute;left:741.2px;top:143.5px;width:1px;height:12.2px;background:#cfc79f;box-shadow:1px 0 0 #faf7e8;"></div>
<div style="position:absolute;left:741.2px;top:155.7px;width:1px;height:157.70000000000002px;background:#dde2ec;"></div>
<div style="position:absolute;left:858.0px;top:143.5px;width:1px;height:12.2px;background:#cfc79f;box-shadow:1px 0 0 #faf7e8;"></div>
<span class="t" style="left:36.3px;transform-origin:0 50%;top:143.50px;font-size:7.6px;transform:scaleX(0.845);color:#2e2a1e;font-weight:normal;">Номер</span>
<span class="t" style="left:73.5px;transform-origin:0 50%;top:143.50px;font-size:7.6px;transform:scaleX(0.845);color:#2e2a1e;font-weight:normal;">Дата</span>
<span class="t" style="left:131.1px;transform-origin:0 50%;top:143.50px;font-size:7.6px;transform:scaleX(0.845);color:#2e2a1e;font-weight:normal;">Контрагент</span>
<span class="t" style="left:275.6px;transform-origin:0 50%;top:143.50px;font-size:7.6px;transform:scaleX(0.845);color:#2e2a1e;font-weight:normal;">Форма оплаты</span>
<span class="t" style="left:356.1px;transform-origin:0 50%;top:143.50px;font-size:7.6px;transform:scaleX(0.845);color:#2e2a1e;font-weight:normal;">Валюта</span>
<span class="t" style="left:413.3px;transform-origin:0 50%;top:143.50px;font-size:7.6px;transform:scaleX(0.845);color:#2e2a1e;font-weight:normal;">Сумма</span>
<span class="t" style="left:470.8px;transform-origin:0 50%;top:143.50px;font-size:7.6px;transform:scaleX(0.845);color:#2e2a1e;font-weight:normal;">Вид</span>
<span class="t" style="left:527.9px;transform-origin:0 50%;top:143.50px;font-size:7.6px;transform:scaleX(0.845);color:#2e2a1e;font-weight:normal;">Заказ</span>
<span class="t" style="left:673.8px;transform-origin:0 50%;top:143.50px;font-size:7.6px;transform:scaleX(0.845);color:#2e2a1e;font-weight:normal;">Ответственный</span>
<span class="t" style="left:744.7px;transform-origin:0 50%;top:143.50px;font-size:7.6px;transform:scaleX(0.845);color:#2e2a1e;font-weight:normal;">Комментарий</span>
<svg style="position:absolute;left:117.6px;top:147.1px;" width="7" height="4.6" viewBox="0 0 7 4.6"><path d="M0.3 4.7 L3.5 0.5 L6.7 4.7 Z" fill="#d9d2b0" stroke="#b5ad86" stroke-width="0.6"/></svg>
<div style="position:absolute;left:20px;top:166.54999999999998px;width:838.5px;height:1px;background:#dde2ed;"></div>
<svg style="position:absolute;left:22.6px;top:157.89999999999998px;" width="10" height="8.5" viewBox="0 0 10 8.5"><rect x=".5" y=".5" width="7.2" height="5.4" rx="1" fill="#f3f6f9" stroke="#97a5b6" stroke-width=".8"/><path d="M1.4 2.3H6.8M1.4 3.9H6.8M4.1 1V5.4" stroke="#b4c0ce" stroke-width=".6"/><path d="M5 5.2L6.3 6.7L8.7 3.9" fill="none" stroke="#25a32a" stroke-width="1.4"/></svg>
<span class="t" style="left:36.3px;transform-origin:0 50%;top:156.08px;font-size:8.0px;transform:scaleX(0.813);color:#000;font-weight:normal;">0000000...</span>
<span class="t" style="left:73.5px;transform-origin:0 50%;top:156.08px;font-size:8.0px;transform:scaleX(0.813);color:#000;font-weight:normal;">22.02.2019 13:3...</span>
<span class="t" style="left:131.1px;transform-origin:0 50%;top:156.08px;font-size:8.0px;transform:scaleX(0.813);color:#000;font-weight:normal;">ТМ УльтраПлюсТерма</span>
<span class="t" style="left:274.6px;transform-origin:0 50%;top:156.08px;font-size:8.0px;transform:scaleX(0.813);color:#000;font-weight:normal;">Оплата наличными</span>
<span class="t" style="left:356.1px;transform-origin:0 50%;top:156.08px;font-size:8.0px;transform:scaleX(0.813);color:#000;font-weight:normal;">BYN</span>
<span class="t" style="right:422.4px;transform-origin:100% 50%;top:156.08px;font-size:8.0px;transform:scaleX(0.813);color:#000;font-weight:normal;">900,00</span>
<span class="t" style="left:470.2px;transform-origin:0 50%;top:156.08px;font-size:8.0px;transform:scaleX(0.813);color:#000;font-weight:normal;">Расход</span>
<span class="t" style="left:527.9px;transform-origin:0 50%;top:156.08px;font-size:8.0px;transform:scaleX(0.813);color:#000;font-weight:normal;">Заказ клиента 000000003 от 01.02.2019 16:5...</span>
<span class="t" style="left:673.8px;transform-origin:0 50%;top:156.08px;font-size:8.0px;transform:scaleX(0.813);color:#000;font-weight:normal;">Менеждер по прод...</span>
<div style="position:absolute;left:20px;top:177.89999999999998px;width:838.5px;height:1px;background:#dde2ed;"></div>
<svg style="position:absolute;left:22.6px;top:169.24999999999997px;" width="10" height="8.5" viewBox="0 0 10 8.5"><rect x=".5" y=".5" width="7.2" height="5.4" rx="1" fill="#f3f6f9" stroke="#97a5b6" stroke-width=".8"/><path d="M1.4 2.3H6.8M1.4 3.9H6.8M4.1 1V5.4" stroke="#b4c0ce" stroke-width=".6"/><path d="M5 5.2L6.3 6.7L8.7 3.9" fill="none" stroke="#25a32a" stroke-width="1.4"/></svg>
<span class="t" style="left:36.3px;transform-origin:0 50%;top:167.43px;font-size:8.0px;transform:scaleX(0.813);color:#000;font-weight:normal;">0000000...</span>
<span class="t" style="left:73.5px;transform-origin:0 50%;top:167.43px;font-size:8.0px;transform:scaleX(0.813);color:#000;font-weight:normal;">22.02.2019 13:3...</span>
<span class="t" style="left:131.1px;transform-origin:0 50%;top:167.43px;font-size:8.0px;transform:scaleX(0.813);color:#000;font-weight:normal;">МетЭЛС</span>
<span class="t" style="left:274.6px;transform-origin:0 50%;top:167.43px;font-size:8.0px;transform:scaleX(0.813);color:#000;font-weight:normal;">Оплата наличными</span>
<span class="t" style="left:356.1px;transform-origin:0 50%;top:167.43px;font-size:8.0px;transform:scaleX(0.813);color:#000;font-weight:normal;">BYN</span>
<span class="t" style="right:422.4px;transform-origin:100% 50%;top:167.43px;font-size:8.0px;transform:scaleX(0.813);color:#000;font-weight:normal;">291,54</span>
<span class="t" style="left:470.2px;transform-origin:0 50%;top:167.43px;font-size:8.0px;transform:scaleX(0.813);color:#000;font-weight:normal;">Расход</span>
<span class="t" style="left:673.8px;transform-origin:0 50%;top:167.43px;font-size:8.0px;transform:scaleX(0.813);color:#000;font-weight:normal;">Менеждер по прод...</span>
<div style="position:absolute;left:20px;top:189.24999999999997px;width:838.5px;height:1px;background:#dde2ed;"></div>
<svg style="position:absolute;left:22.6px;top:180.59999999999997px;" width="10" height="8.5" viewBox="0 0 10 8.5"><rect x=".5" y=".5" width="7.2" height="5.4" rx="1" fill="#f3f6f9" stroke="#97a5b6" stroke-width=".8"/><path d="M1.4 2.3H6.8M1.4 3.9H6.8M4.1 1V5.4" stroke="#b4c0ce" stroke-width=".6"/><path d="M5 5.2L6.3 6.7L8.7 3.9" fill="none" stroke="#25a32a" stroke-width="1.4"/></svg>
<span class="t" style="left:36.3px;transform-origin:0 50%;top:178.78px;font-size:8.0px;transform:scaleX(0.813);color:#000;font-weight:normal;">0000000...</span>
<span class="t" style="left:73.5px;transform-origin:0 50%;top:178.78px;font-size:8.0px;transform:scaleX(0.813);color:#000;font-weight:normal;">22.02.2019 14:2...</span>
<span class="t" style="left:131.1px;transform-origin:0 50%;top:178.78px;font-size:8.0px;transform:scaleX(0.813);color:#000;font-weight:normal;">Сервис-ТНД</span>
<span class="t" style="left:274.6px;transform-origin:0 50%;top:178.78px;font-size:8.0px;transform:scaleX(0.813);color:#000;font-weight:normal;">Оплата безналичными</span>
<span class="t" style="left:356.1px;transform-origin:0 50%;top:178.78px;font-size:8.0px;transform:scaleX(0.813);color:#000;font-weight:normal;">BYN</span>
<span class="t" style="right:422.4px;transform-origin:100% 50%;top:178.78px;font-size:8.0px;transform:scaleX(0.813);color:#000;font-weight:normal;">1 800,00</span>
<span class="t" style="left:470.2px;transform-origin:0 50%;top:178.78px;font-size:8.0px;transform:scaleX(0.813);color:#000;font-weight:normal;">Расход</span>
<span class="t" style="left:673.8px;transform-origin:0 50%;top:178.78px;font-size:8.0px;transform:scaleX(0.813);color:#000;font-weight:normal;">Менеждер по прод...</span>
<div style="position:absolute;left:20px;top:200.6px;width:838.5px;height:1px;background:#dde2ed;"></div>
<svg style="position:absolute;left:22.6px;top:191.95px;" width="10" height="8.5" viewBox="0 0 10 8.5"><rect x=".5" y=".5" width="7.2" height="5.4" rx="1" fill="#f3f6f9" stroke="#97a5b6" stroke-width=".8"/><path d="M1.4 2.3H6.8M1.4 3.9H6.8M4.1 1V5.4" stroke="#b4c0ce" stroke-width=".6"/><path d="M5 5.2L6.3 6.7L8.7 3.9" fill="none" stroke="#25a32a" stroke-width="1.4"/></svg>
<span class="t" style="left:36.3px;transform-origin:0 50%;top:190.13px;font-size:8.0px;transform:scaleX(0.813);color:#000;font-weight:normal;">0000000...</span>
<span class="t" style="left:73.5px;transform-origin:0 50%;top:190.13px;font-size:8.0px;transform:scaleX(0.813);color:#000;font-weight:normal;">22.02.2019 15:0...</span>
<span class="t" style="left:131.1px;transform-origin:0 50%;top:190.13px;font-size:8.0px;transform:scaleX(0.813);color:#000;font-weight:normal;">ИнвестПлюсТермо</span>
<span class="t" style="left:274.6px;transform-origin:0 50%;top:190.13px;font-size:8.0px;transform:scaleX(0.813);color:#000;font-weight:normal;">Оплата безналичными</span>
<span class="t" style="left:356.1px;transform-origin:0 50%;top:190.13px;font-size:8.0px;transform:scaleX(0.813);color:#000;font-weight:normal;">BYN</span>
<span class="t" style="right:422.4px;transform-origin:100% 50%;top:190.13px;font-size:8.0px;transform:scaleX(0.813);color:#000;font-weight:normal;">3 600,00</span>
<span class="t" style="left:470.2px;transform-origin:0 50%;top:190.13px;font-size:8.0px;transform:scaleX(0.813);color:#000;font-weight:normal;">Расход</span>
<span class="t" style="left:673.8px;transform-origin:0 50%;top:190.13px;font-size:8.0px;transform:scaleX(0.813);color:#000;font-weight:normal;">Менеждер по прод...</span>
<div style="position:absolute;left:20px;top:211.95px;width:838.5px;height:1px;background:#dde2ed;"></div>
<svg style="position:absolute;left:22.6px;top:203.29999999999998px;" width="10" height="8.5" viewBox="0 0 10 8.5"><rect x=".5" y=".5" width="7.2" height="5.4" rx="1" fill="#f3f6f9" stroke="#97a5b6" stroke-width=".8"/><path d="M1.4 2.3H6.8M1.4 3.9H6.8M4.1 1V5.4" stroke="#b4c0ce" stroke-width=".6"/><path d="M5 5.2L6.3 6.7L8.7 3.9" fill="none" stroke="#25a32a" stroke-width="1.4"/></svg>
<span class="t" style="left:36.3px;transform-origin:0 50%;top:201.48px;font-size:8.0px;transform:scaleX(0.813);color:#000;font-weight:normal;">0000000...</span>
<span class="t" style="left:73.5px;transform-origin:0 50%;top:201.48px;font-size:8.0px;transform:scaleX(0.813);color:#000;font-weight:normal;">23.02.2019 16:0...</span>
<span class="t" style="left:131.1px;transform-origin:0 50%;top:201.48px;font-size:8.0px;transform:scaleX(0.813);color:#000;font-weight:normal;">ПРО-Дент</span>
<span class="t" style="left:274.6px;transform-origin:0 50%;top:201.48px;font-size:8.0px;transform:scaleX(0.813);color:#000;font-weight:normal;">Оплата безналичными</span>
<span class="t" style="left:356.1px;transform-origin:0 50%;top:201.48px;font-size:8.0px;transform:scaleX(0.813);color:#000;font-weight:normal;">BYN</span>
<span class="t" style="right:422.4px;transform-origin:100% 50%;top:201.48px;font-size:8.0px;transform:scaleX(0.813);color:#000;font-weight:normal;">3 960,00</span>
<span class="t" style="left:470.2px;transform-origin:0 50%;top:201.48px;font-size:8.0px;transform:scaleX(0.813);color:#000;font-weight:normal;">Расход</span>
<span class="t" style="left:527.9px;transform-origin:0 50%;top:201.48px;font-size:8.0px;transform:scaleX(0.813);color:#000;font-weight:normal;">Заказ клиента 000000012 от 23.02.2019 15:5...</span>
<span class="t" style="left:673.8px;transform-origin:0 50%;top:201.48px;font-size:8.0px;transform:scaleX(0.813);color:#000;font-weight:normal;">Менеждер по прод...</span>
<div style="position:absolute;left:20px;top:223.29999999999998px;width:838.5px;height:1px;background:#dde2ed;"></div>
<svg style="position:absolute;left:22.6px;top:214.64999999999998px;" width="10" height="8.5" viewBox="0 0 10 8.5"><rect x=".5" y=".5" width="7.2" height="5.4" rx="1" fill="#f3f6f9" stroke="#97a5b6" stroke-width=".8"/><path d="M1.4 2.3H6.8M1.4 3.9H6.8M4.1 1V5.4" stroke="#b4c0ce" stroke-width=".6"/><path d="M5 5.2L6.3 6.7L8.7 3.9" fill="none" stroke="#25a32a" stroke-width="1.4"/></svg>
<span class="t" style="left:36.3px;transform-origin:0 50%;top:212.83px;font-size:8.0px;transform:scaleX(0.813);color:#000;font-weight:normal;">0000000...</span>
<span class="t" style="left:73.5px;transform-origin:0 50%;top:212.83px;font-size:8.0px;transform:scaleX(0.813);color:#000;font-weight:normal;">23.02.2019 16:5...</span>
<span class="t" style="left:131.1px;transform-origin:0 50%;top:212.83px;font-size:8.0px;transform:scaleX(0.813);color:#000;font-weight:normal;">Магазин</span>
<span class="t" style="left:274.6px;transform-origin:0 50%;top:212.83px;font-size:8.0px;transform:scaleX(0.813);color:#000;font-weight:normal;">Оплата наличными</span>
<span class="t" style="left:356.1px;transform-origin:0 50%;top:212.83px;font-size:8.0px;transform:scaleX(0.813);color:#000;font-weight:normal;">BYN</span>
<span class="t" style="right:422.4px;transform-origin:100% 50%;top:212.83px;font-size:8.0px;transform:scaleX(0.813);color:#000;font-weight:normal;">4 857,40</span>
<span class="t" style="left:470.2px;transform-origin:0 50%;top:212.83px;font-size:8.0px;transform:scaleX(0.813);color:#000;font-weight:normal;">Приход</span>
<span class="t" style="left:527.9px;transform-origin:0 50%;top:212.83px;font-size:8.0px;transform:scaleX(0.813);color:#000;font-weight:normal;">Заказ клиента 000000012 от 23.02.2019 15:5...</span>
<span class="t" style="left:673.8px;transform-origin:0 50%;top:212.83px;font-size:8.0px;transform:scaleX(0.813);color:#000;font-weight:normal;">Менеждер по прод...</span>
<div style="position:absolute;left:20px;top:234.64999999999998px;width:838.5px;height:1px;background:#dde2ed;"></div>
<svg style="position:absolute;left:22.6px;top:225.99999999999997px;" width="10" height="8.5" viewBox="0 0 10 8.5"><rect x=".5" y=".5" width="7.2" height="5.4" rx="1" fill="#f3f6f9" stroke="#97a5b6" stroke-width=".8"/><path d="M1.4 2.3H6.8M1.4 3.9H6.8M4.1 1V5.4" stroke="#b4c0ce" stroke-width=".6"/></svg>
<span class="t" style="left:36.3px;transform-origin:0 50%;top:224.18px;font-size:8.0px;transform:scaleX(0.813);color:#000;font-weight:normal;">0000000...</span>
<span class="t" style="left:73.5px;transform-origin:0 50%;top:224.18px;font-size:8.0px;transform:scaleX(0.813);color:#000;font-weight:normal;">23.02.2019 20:2...</span>
<span class="t" style="left:131.1px;transform-origin:0 50%;top:224.18px;font-size:8.0px;transform:scaleX(0.813);color:#000;font-weight:normal;">Магазин</span>
<span class="t" style="left:274.6px;transform-origin:0 50%;top:224.18px;font-size:8.0px;transform:scaleX(0.813);color:#000;font-weight:normal;">Оплата наличными</span>
<span class="t" style="left:356.1px;transform-origin:0 50%;top:224.18px;font-size:8.0px;transform:scaleX(0.813);color:#000;font-weight:normal;">BYN</span>
<span class="t" style="right:422.4px;transform-origin:100% 50%;top:224.18px;font-size:8.0px;transform:scaleX(0.813);color:#000;font-weight:normal;">24,00</span>
<span class="t" style="left:470.2px;transform-origin:0 50%;top:224.18px;font-size:8.0px;transform:scaleX(0.813);color:#000;font-weight:normal;">Возврат покуп...</span>
<span class="t" style="left:527.9px;transform-origin:0 50%;top:224.18px;font-size:8.0px;transform:scaleX(0.813);color:#000;font-weight:normal;">Заказ клиента 000000002 от 01.02.2019 14:3...</span>
<span class="t" style="left:673.8px;transform-origin:0 50%;top:224.18px;font-size:8.0px;transform:scaleX(0.813);color:#000;font-weight:normal;">Менеждер по прод...</span>
<div style="position:absolute;left:20px;top:245.99999999999997px;width:838.5px;height:1px;background:#dde2ed;"></div>
<svg style="position:absolute;left:22.6px;top:237.34999999999997px;" width="10" height="8.5" viewBox="0 0 10 8.5"><rect x=".5" y=".5" width="7.2" height="5.4" rx="1" fill="#f3f6f9" stroke="#97a5b6" stroke-width=".8"/><path d="M1.4 2.3H6.8M1.4 3.9H6.8M4.1 1V5.4" stroke="#b4c0ce" stroke-width=".6"/><path d="M5 5.2L6.3 6.7L8.7 3.9" fill="none" stroke="#25a32a" stroke-width="1.4"/></svg>
<span class="t" style="left:36.3px;transform-origin:0 50%;top:235.53px;font-size:8.0px;transform:scaleX(0.813);color:#000;font-weight:normal;">0000000...</span>
<span class="t" style="left:73.5px;transform-origin:0 50%;top:235.53px;font-size:8.0px;transform:scaleX(0.813);color:#000;font-weight:normal;">25.02.2019 19:4...</span>
<span class="t" style="left:131.1px;transform-origin:0 50%;top:235.53px;font-size:8.0px;transform:scaleX(0.813);color:#000;font-weight:normal;">Термо-дом</span>
<span class="t" style="left:274.6px;transform-origin:0 50%;top:235.53px;font-size:8.0px;transform:scaleX(0.813);color:#000;font-weight:normal;">Оплата безналичными</span>
<span class="t" style="left:356.1px;transform-origin:0 50%;top:235.53px;font-size:8.0px;transform:scaleX(0.813);color:#000;font-weight:normal;">BYN</span>
<span class="t" style="right:422.4px;transform-origin:100% 50%;top:235.53px;font-size:8.0px;transform:scaleX(0.813);color:#000;font-weight:normal;">-0,01</span>
<span class="t" style="left:470.2px;transform-origin:0 50%;top:235.53px;font-size:8.0px;transform:scaleX(0.813);color:#000;font-weight:normal;">Расход</span>
<span class="t" style="left:673.8px;transform-origin:0 50%;top:235.53px;font-size:8.0px;transform:scaleX(0.813);color:#000;font-weight:normal;">Менеждер по прод...</span>
<div style="position:absolute;left:20px;top:257.35px;width:838.5px;height:1px;background:#dde2ed;"></div>
<svg style="position:absolute;left:22.6px;top:248.7px;" width="10" height="8.5" viewBox="0 0 10 8.5"><rect x=".5" y=".5" width="7.2" height="5.4" rx="1" fill="#f3f6f9" stroke="#97a5b6" stroke-width=".8"/><path d="M1.4 2.3H6.8M1.4 3.9H6.8M4.1 1V5.4" stroke="#b4c0ce" stroke-width=".6"/><path d="M5 5.2L6.3 6.7L8.7 3.9" fill="none" stroke="#25a32a" stroke-width="1.4"/></svg>
<span class="t" style="left:36.3px;transform-origin:0 50%;top:246.88px;font-size:8.0px;transform:scaleX(0.813);color:#000;font-weight:normal;">0000000...</span>
<span class="t" style="left:73.5px;transform-origin:0 50%;top:246.88px;font-size:8.0px;transform:scaleX(0.813);color:#000;font-weight:normal;">13.03.2019 16:1...</span>
<span class="t" style="left:131.1px;transform-origin:0 50%;top:246.88px;font-size:8.0px;transform:scaleX(0.813);color:#000;font-weight:normal;">Жуков Дмитрий Анатольевич</span>
<span class="t" style="left:274.6px;transform-origin:0 50%;top:246.88px;font-size:8.0px;transform:scaleX(0.813);color:#000;font-weight:normal;">Оплата наличными</span>
<span class="t" style="left:356.1px;transform-origin:0 50%;top:246.88px;font-size:8.0px;transform:scaleX(0.813);color:#000;font-weight:normal;">BYN</span>
<span class="t" style="right:422.4px;transform-origin:100% 50%;top:246.88px;font-size:8.0px;transform:scaleX(0.813);color:#000;font-weight:normal;">8 535,00</span>
<span class="t" style="left:470.2px;transform-origin:0 50%;top:246.88px;font-size:8.0px;transform:scaleX(0.813);color:#000;font-weight:normal;">Приход</span>
<span class="t" style="left:527.9px;transform-origin:0 50%;top:246.88px;font-size:8.0px;transform:scaleX(0.813);color:#000;font-weight:normal;">Заказ клиента 000000014 от 13.03.2019 16:0...</span>
<span class="t" style="left:673.8px;transform-origin:0 50%;top:246.88px;font-size:8.0px;transform:scaleX(0.813);color:#000;font-weight:normal;">Менеждер по прод...</span>
<div style="position:absolute;left:20px;top:268.7px;width:838.5px;height:1px;background:#dde2ed;"></div>
<svg style="position:absolute;left:22.6px;top:260.04999999999995px;" width="10" height="8.5" viewBox="0 0 10 8.5"><rect x=".5" y=".5" width="7.2" height="5.4" rx="1" fill="#f3f6f9" stroke="#97a5b6" stroke-width=".8"/><path d="M1.4 2.3H6.8M1.4 3.9H6.8M4.1 1V5.4" stroke="#b4c0ce" stroke-width=".6"/><path d="M5 5.2L6.3 6.7L8.7 3.9" fill="none" stroke="#25a32a" stroke-width="1.4"/></svg>
<span class="t" style="left:36.3px;transform-origin:0 50%;top:258.22px;font-size:8.0px;transform:scaleX(0.813);color:#000;font-weight:normal;">0000000...</span>
<span class="t" style="left:73.5px;transform-origin:0 50%;top:258.22px;font-size:8.0px;transform:scaleX(0.813);color:#000;font-weight:normal;">28.03.2019 9:35...</span>
<span class="t" style="left:131.1px;transform-origin:0 50%;top:258.22px;font-size:8.0px;transform:scaleX(0.813);color:#000;font-weight:normal;">Федоров Антон Витальевич</span>
<span class="t" style="left:274.6px;transform-origin:0 50%;top:258.22px;font-size:8.0px;transform:scaleX(0.813);color:#000;font-weight:normal;">Оплата наличными</span>
<span class="t" style="left:356.1px;transform-origin:0 50%;top:258.22px;font-size:8.0px;transform:scaleX(0.813);color:#000;font-weight:normal;">BYN</span>
<span class="t" style="right:422.4px;transform-origin:100% 50%;top:258.22px;font-size:8.0px;transform:scaleX(0.813);color:#000;font-weight:normal;">2 586,70</span>
<span class="t" style="left:470.2px;transform-origin:0 50%;top:258.22px;font-size:8.0px;transform:scaleX(0.813);color:#000;font-weight:normal;">Приход</span>
<span class="t" style="left:527.9px;transform-origin:0 50%;top:258.22px;font-size:8.0px;transform:scaleX(0.813);color:#000;font-weight:normal;">Заказ клиента 000000017 от 28.03.2019 9:35...</span>
<span class="t" style="left:673.8px;transform-origin:0 50%;top:258.22px;font-size:8.0px;transform:scaleX(0.813);color:#000;font-weight:normal;">Менеждер по прод...</span>
<div style="position:absolute;left:20px;top:280.05px;width:838.5px;height:1px;background:#dde2ed;"></div>
<svg style="position:absolute;left:22.6px;top:271.4px;" width="10" height="8.5" viewBox="0 0 10 8.5"><rect x=".5" y=".5" width="7.2" height="5.4" rx="1" fill="#f3f6f9" stroke="#97a5b6" stroke-width=".8"/><path d="M1.4 2.3H6.8M1.4 3.9H6.8M4.1 1V5.4" stroke="#b4c0ce" stroke-width=".6"/><path d="M5 5.2L6.3 6.7L8.7 3.9" fill="none" stroke="#25a32a" stroke-width="1.4"/></svg>
<span class="t" style="left:36.3px;transform-origin:0 50%;top:269.57px;font-size:8.0px;transform:scaleX(0.813);color:#000;font-weight:normal;">0000000...</span>
<span class="t" style="left:73.5px;transform-origin:0 50%;top:269.57px;font-size:8.0px;transform:scaleX(0.813);color:#000;font-weight:normal;">29.03.2019 0:17...</span>
<span class="t" style="left:131.1px;transform-origin:0 50%;top:269.57px;font-size:8.0px;transform:scaleX(0.813);color:#000;font-weight:normal;">К-ТИБЛС</span>
<span class="t" style="left:274.6px;transform-origin:0 50%;top:269.57px;font-size:8.0px;transform:scaleX(0.813);color:#000;font-weight:normal;">Оплата безналичными</span>
<span class="t" style="left:356.1px;transform-origin:0 50%;top:269.57px;font-size:8.0px;transform:scaleX(0.813);color:#000;font-weight:normal;">BYN</span>
<span class="t" style="right:422.4px;transform-origin:100% 50%;top:269.57px;font-size:8.0px;transform:scaleX(0.813);color:#000;font-weight:normal;">1 378,23</span>
<span class="t" style="left:470.2px;transform-origin:0 50%;top:269.57px;font-size:8.0px;transform:scaleX(0.813);color:#000;font-weight:normal;">Расход</span>
<span class="t" style="left:527.9px;transform-origin:0 50%;top:269.57px;font-size:8.0px;transform:scaleX(0.813);color:#000;font-weight:normal;">Заказ клиента 000000017 от 28.03.2019 9:35...</span>
<span class="t" style="left:673.8px;transform-origin:0 50%;top:269.57px;font-size:8.0px;transform:scaleX(0.813);color:#000;font-weight:normal;">Менеждер по прод...</span>
<div style="position:absolute;left:20px;top:291.4px;width:838.5px;height:1px;background:#dde2ed;"></div>
<svg style="position:absolute;left:22.6px;top:282.74999999999994px;" width="10" height="8.5" viewBox="0 0 10 8.5"><rect x=".5" y=".5" width="7.2" height="5.4" rx="1" fill="#f3f6f9" stroke="#97a5b6" stroke-width=".8"/><path d="M1.4 2.3H6.8M1.4 3.9H6.8M4.1 1V5.4" stroke="#b4c0ce" stroke-width=".6"/><path d="M5 5.2L6.3 6.7L8.7 3.9" fill="none" stroke="#25a32a" stroke-width="1.4"/></svg>
<span class="t" style="left:36.3px;transform-origin:0 50%;top:280.92px;font-size:8.0px;transform:scaleX(0.813);color:#000;font-weight:normal;">0000000...</span>
<span class="t" style="left:73.5px;transform-origin:0 50%;top:280.92px;font-size:8.0px;transform:scaleX(0.813);color:#000;font-weight:normal;">29.03.2019 0:20...</span>
<span class="t" style="left:131.1px;transform-origin:0 50%;top:280.92px;font-size:8.0px;transform:scaleX(0.813);color:#000;font-weight:normal;">ТД "Котлы"</span>
<span class="t" style="left:274.6px;transform-origin:0 50%;top:280.92px;font-size:8.0px;transform:scaleX(0.813);color:#000;font-weight:normal;">Оплата безналичными</span>
<span class="t" style="left:356.1px;transform-origin:0 50%;top:280.92px;font-size:8.0px;transform:scaleX(0.813);color:#000;font-weight:normal;">BYN</span>
<span class="t" style="right:422.4px;transform-origin:100% 50%;top:280.92px;font-size:8.0px;transform:scaleX(0.813);color:#000;font-weight:normal;">2 280,00</span>
<span class="t" style="left:470.2px;transform-origin:0 50%;top:280.92px;font-size:8.0px;transform:scaleX(0.813);color:#000;font-weight:normal;">Расход</span>
<span class="t" style="left:527.9px;transform-origin:0 50%;top:280.92px;font-size:8.0px;transform:scaleX(0.813);color:#000;font-weight:normal;">Заказ клиента 000000018 от 29.03.2019 0:20...</span>
<span class="t" style="left:673.8px;transform-origin:0 50%;top:280.92px;font-size:8.0px;transform:scaleX(0.813);color:#000;font-weight:normal;">Менеждер по прод...</span>
<div style="position:absolute;left:20px;top:302.75px;width:838.5px;height:1px;background:#dde2ed;"></div>
<svg style="position:absolute;left:22.6px;top:294.09999999999997px;" width="10" height="8.5" viewBox="0 0 10 8.5"><rect x=".5" y=".5" width="7.2" height="5.4" rx="1" fill="#f3f6f9" stroke="#97a5b6" stroke-width=".8"/><path d="M1.4 2.3H6.8M1.4 3.9H6.8M4.1 1V5.4" stroke="#b4c0ce" stroke-width=".6"/><path d="M5 5.2L6.3 6.7L8.7 3.9" fill="none" stroke="#25a32a" stroke-width="1.4"/></svg>
<span class="t" style="left:36.3px;transform-origin:0 50%;top:292.27px;font-size:8.0px;transform:scaleX(0.813);color:#000;font-weight:normal;">0000000...</span>
<span class="t" style="left:73.5px;transform-origin:0 50%;top:292.27px;font-size:8.0px;transform:scaleX(0.813);color:#000;font-weight:normal;">29.03.2019 0:20...</span>
<span class="t" style="left:131.1px;transform-origin:0 50%;top:292.27px;font-size:8.0px;transform:scaleX(0.813);color:#000;font-weight:normal;">К-ТИБЛС</span>
<span class="t" style="left:274.6px;transform-origin:0 50%;top:292.27px;font-size:8.0px;transform:scaleX(0.813);color:#000;font-weight:normal;">Оплата безналичными</span>
<span class="t" style="left:356.1px;transform-origin:0 50%;top:292.27px;font-size:8.0px;transform:scaleX(0.813);color:#000;font-weight:normal;">BYN</span>
<span class="t" style="right:422.4px;transform-origin:100% 50%;top:292.27px;font-size:8.0px;transform:scaleX(0.813);color:#000;font-weight:normal;">918,82</span>
<span class="t" style="left:470.2px;transform-origin:0 50%;top:292.27px;font-size:8.0px;transform:scaleX(0.813);color:#000;font-weight:normal;">Расход</span>
<span class="t" style="left:527.9px;transform-origin:0 50%;top:292.27px;font-size:8.0px;transform:scaleX(0.813);color:#000;font-weight:normal;">Заказ клиента 000000018 от 29.03.2019 0:20...</span>
<span class="t" style="left:673.8px;transform-origin:0 50%;top:292.27px;font-size:8.0px;transform:scaleX(0.813);color:#000;font-weight:normal;">Менеждер по прод...</span>
<div style="position:absolute;left:20px;top:302.65px;width:838.5px;height:11.549999999999999px;background:#6b97d3;"></div>
<div style="position:absolute;left:32.8px;top:302.65px;width:1px;height:11.549999999999999px;background:#7ca4da;"></div>
<div style="position:absolute;left:70.0px;top:302.65px;width:1px;height:11.549999999999999px;background:#7ca4da;"></div>
<div style="position:absolute;left:127.6px;top:302.65px;width:1px;height:11.549999999999999px;background:#7ca4da;"></div>
<div style="position:absolute;left:272.1px;top:302.65px;width:1px;height:11.549999999999999px;background:#7ca4da;"></div>
<div style="position:absolute;left:352.6px;top:302.65px;width:1px;height:11.549999999999999px;background:#7ca4da;"></div>
<div style="position:absolute;left:409.8px;top:302.65px;width:1px;height:11.549999999999999px;background:#7ca4da;"></div>
<div style="position:absolute;left:467.3px;top:302.65px;width:1px;height:11.549999999999999px;background:#7ca4da;"></div>
<div style="position:absolute;left:524.4px;top:302.65px;width:1px;height:11.549999999999999px;background:#7ca4da;"></div>
<div style="position:absolute;left:670.3px;top:302.65px;width:1px;height:11.549999999999999px;background:#7ca4da;"></div>
<div style="position:absolute;left:741.2px;top:302.65px;width:1px;height:11.549999999999999px;background:#7ca4da;"></div>
<svg style="position:absolute;left:22.6px;top:305.45px;" width="10" height="8.5" viewBox="0 0 10 8.5"><rect x=".5" y=".5" width="7.2" height="5.4" rx="1" fill="#f3f6f9" stroke="#97a5b6" stroke-width=".8"/><path d="M1.4 2.3H6.8M1.4 3.9H6.8M4.1 1V5.4" stroke="#b4c0ce" stroke-width=".6"/><path d="M5 5.2L6.3 6.7L8.7 3.9" fill="none" stroke="#25a32a" stroke-width="1.4"/></svg>
<span class="t" style="left:36.3px;transform-origin:0 50%;top:303.62px;font-size:8.0px;transform:scaleX(0.813);color:#0c1626;font-weight:normal;">0000000...</span>
<span class="t" style="left:73.5px;transform-origin:0 50%;top:303.62px;font-size:8.0px;transform:scaleX(0.813);color:#0c1626;font-weight:normal;">29.03.2019 0:21...</span>
<span class="t" style="left:131.1px;transform-origin:0 50%;top:303.62px;font-size:8.0px;transform:scaleX(0.813);color:#0c1626;font-weight:normal;">АЛЬФАБЕТА</span>
<span class="t" style="left:274.6px;transform-origin:0 50%;top:303.62px;font-size:8.0px;transform:scaleX(0.813);color:#0c1626;font-weight:normal;">Оплата безналичными</span>
<span class="t" style="left:356.1px;transform-origin:0 50%;top:303.62px;font-size:8.0px;transform:scaleX(0.813);color:#0c1626;font-weight:normal;">BYN</span>
<span class="t" style="right:422.4px;transform-origin:100% 50%;top:303.62px;font-size:8.0px;transform:scaleX(0.813);color:#0c1626;font-weight:normal;">5 173,40</span>
<span class="t" style="left:470.2px;transform-origin:0 50%;top:303.62px;font-size:8.0px;transform:scaleX(0.813);color:#0c1626;font-weight:normal;">Приход</span>
<span class="t" style="left:527.9px;transform-origin:0 50%;top:303.62px;font-size:8.0px;transform:scaleX(0.813);color:#0c1626;font-weight:normal;">Заказ клиента 000000018 от 29.03.2019 0:20...</span>
<span class="t" style="left:673.8px;transform-origin:0 50%;top:303.62px;font-size:8.0px;transform:scaleX(0.813);color:#0c1626;font-weight:normal;">Менеждер по прод...</span>
<div style="position:absolute;left:858.5px;top:143.5px;width:8.5px;height:179.3px;background:#fcfbf1;border-left:1px solid #e4dfc6;"></div>
<div style="position:absolute;left:858.5px;top:143.5px;width:8.5px;height:11.7px;background:linear-gradient(#fbf9ee,#f3efdb);border-left:1px solid #d6cfac;border-bottom:1px solid #e2dcc0;"></div>
<div style="position:absolute;left:858.5px;top:155.2px;width:8.5px;height:82.5px;background:#f9f7ea;border:1px solid #e2dcc0;border-right:none;border-radius:1px;"></div>
<div style="position:absolute;left:858.5px;top:311.5px;width:8.5px;height:11.300000000000011px;background:#f6f3e2;border:1px solid #e2dcc0;border-right:none;border-bottom:none;"></div>
<svg style="position:absolute;left:860.6px;top:147.3px;" width="4.2" height="3.8" viewBox="0 0 4.2 3.8"><path d="M0 3.8L2.1 0L4.2 3.8Z" fill="#85857e"/></svg>
<svg style="position:absolute;left:860.6px;top:315.5px;" width="4.2" height="3.8" viewBox="0 0 4.2 3.8"><path d="M0 0L2.1 3.8L4.2 0Z" fill="#85857e"/></svg>
<svg style="position:absolute;left:860.6px;top:231px;" width="4" height="4" viewBox="0 0 4 4"><path d="M.5 1H3.5M.5 2.2H3.5M.5 3.4H3.5" stroke="#c9c3a6" stroke-width=".5"/></svg>
<span class="t" style="left:19px;transform-origin:0 50%;top:326.00px;font-size:9.2px;transform:scaleX(0.9446);color:#0c0a06;font-weight:bold;-webkit-text-stroke:0.25px #0c0a06;">Данные по документу : Оплата 000000028 от 29.03.2019 0:21:06</span>
<div style="position:absolute;left:19px;top:339.3px;width:849px;height:117.0px;background:#fff;border:1px solid #d6cfac;"></div>
<div style="position:absolute;left:20px;top:340.3px;width:847px;height:12.2px;background:linear-gradient(#f7f3df,#f0ead0 50%,#e9e1bd);border-bottom:1px solid #cfc79f;"></div>
<div style="position:absolute;left:90.8px;top:340.3px;width:1px;height:12.2px;background:#cfc79f;box-shadow:1px 0 0 #faf7e8;"></div>
<div style="position:absolute;left:90.8px;top:352.5px;width:1px;height:10.85px;background:#dde2ec;"></div>
<div style="position:absolute;left:584.0px;top:340.3px;width:1px;height:12.2px;background:#cfc79f;box-shadow:1px 0 0 #faf7e8;"></div>
<div style="position:absolute;left:584.0px;top:352.5px;width:1px;height:10.85px;background:#dde2ec;"></div>
<span class="t" style="left:22.5px;transform-origin:0 50%;top:340.50px;font-size:7.6px;transform:scaleX(0.845);color:#2e2a1e;font-weight:normal;">№ п/п</span>
<span class="t" style="left:94.3px;transform-origin:0 50%;top:340.50px;font-size:7.6px;transform:scaleX(0.845);color:#2e2a1e;font-weight:normal;">Заказ</span>
<span class="t" style="left:587.5px;transform-origin:0 50%;top:340.50px;font-size:7.6px;transform:scaleX(0.845);color:#2e2a1e;font-weight:normal;">Сумма</span>
<div style="position:absolute;left:20px;top:352.5px;width:70.8px;height:10.549999999999999px;background:#6b97d3;"></div>
<div style="position:absolute;left:91.3px;top:362.95000000000005px;width:775.7px;height:0.9px;background:#c3d3ee;"></div>
<span class="t" style="right:798px;transform-origin:100% 50%;top:352.57px;font-size:8.0px;transform:scaleX(0.813);color:#fff;font-weight:normal;">1</span>
<span class="t" style="left:94.3px;transform-origin:0 50%;top:352.57px;font-size:8.0px;transform:scaleX(0.813);color:#000;font-weight:normal;">Заказ клиента 000000018 от 29.03.2019 0:20:05</span>
<span class="t" style="right:23.5px;transform-origin:100% 50%;top:352.57px;font-size:8.0px;transform:scaleX(0.813);color:#000;font-weight:normal;">5 173,40</span>
<div style="position:absolute;left:5px;top:464px;width:877px;height:27px;background:#f4f0dc;border-top:1px solid #fdfcf6;"></div>
<div style="position:absolute;left:5.5px;top:466.2px;width:102px;height:11.8px;background:#aac6e4;border:1px solid #cfd3cc;border-left:none;"></div>
<svg style="position:absolute;left:6.4px;top:467.2px;" width="9" height="10" viewBox="0 0 9 10"><circle cx="3.2" cy="6.8" r="2.6" fill="#dfe8f2" stroke="#3f6aa0" stroke-width=".8"/><path d="M2 6.8H4.4M3.2 5.6V8" stroke="#3f6aa0" stroke-width=".6"/><path d="M6.4 1L7.1 2.5L8.7 2.7L7.5 3.8L7.8 5.4L6.4 4.6L5 5.4L5.3 3.8L4.1 2.7L5.7 2.5Z" fill="#f6d43a" stroke="#d9a91e" stroke-width=".3"/></svg>
<span class="t" style="left:16.9px;transform-origin:0 50%;top:466.90px;font-size:8.0px;transform:scaleX(0.7965);color:#22324a;font-weight:normal;">Рабочий стол</span>
<span class="t" style="left:6.8px;transform-origin:0 50%;top:479.90px;font-size:8.0px;transform:scaleX(0.8289);color:#1c1a14;font-weight:normal;">Для получения подсказки нажмите F1</span>
<div style="position:absolute;left:5.5px;top:479.3px;width:816px;height:11.2px;border:1px solid #e7e3cc;border-bottom-color:#fbf9ee;border-right-color:#ece8d4;"></div>
<div style="position:absolute;left:824.5px;top:480px;width:17px;height:10px;border:1px solid #e6e1c8;"></div>
<span class="t" style="left:826px;transform-origin:0 50%;top:479.80px;font-size:8.0px;transform:scaleX(0.7903);color:#b8ad88;font-weight:normal;">CAP</span>
<div style="position:absolute;left:845px;top:480px;width:19.5px;height:10px;border:1px solid #e6e1c8;"></div>
<span class="t" style="left:846.5px;transform-origin:0 50%;top:479.80px;font-size:8.0px;transform:scaleX(0.8233);color:#2a2a2a;font-weight:normal;">NUM</span>
<svg style="position:absolute;left:874px;top:483px;" width="8" height="8" viewBox="0 0 8 8"><path d="M7.6 .6L.6 7.6M7.6 3L3 7.6M7.6 5.4L5.4 7.6" stroke="#b9b294" stroke-width=".8"/></svg>
</div></body></html>
